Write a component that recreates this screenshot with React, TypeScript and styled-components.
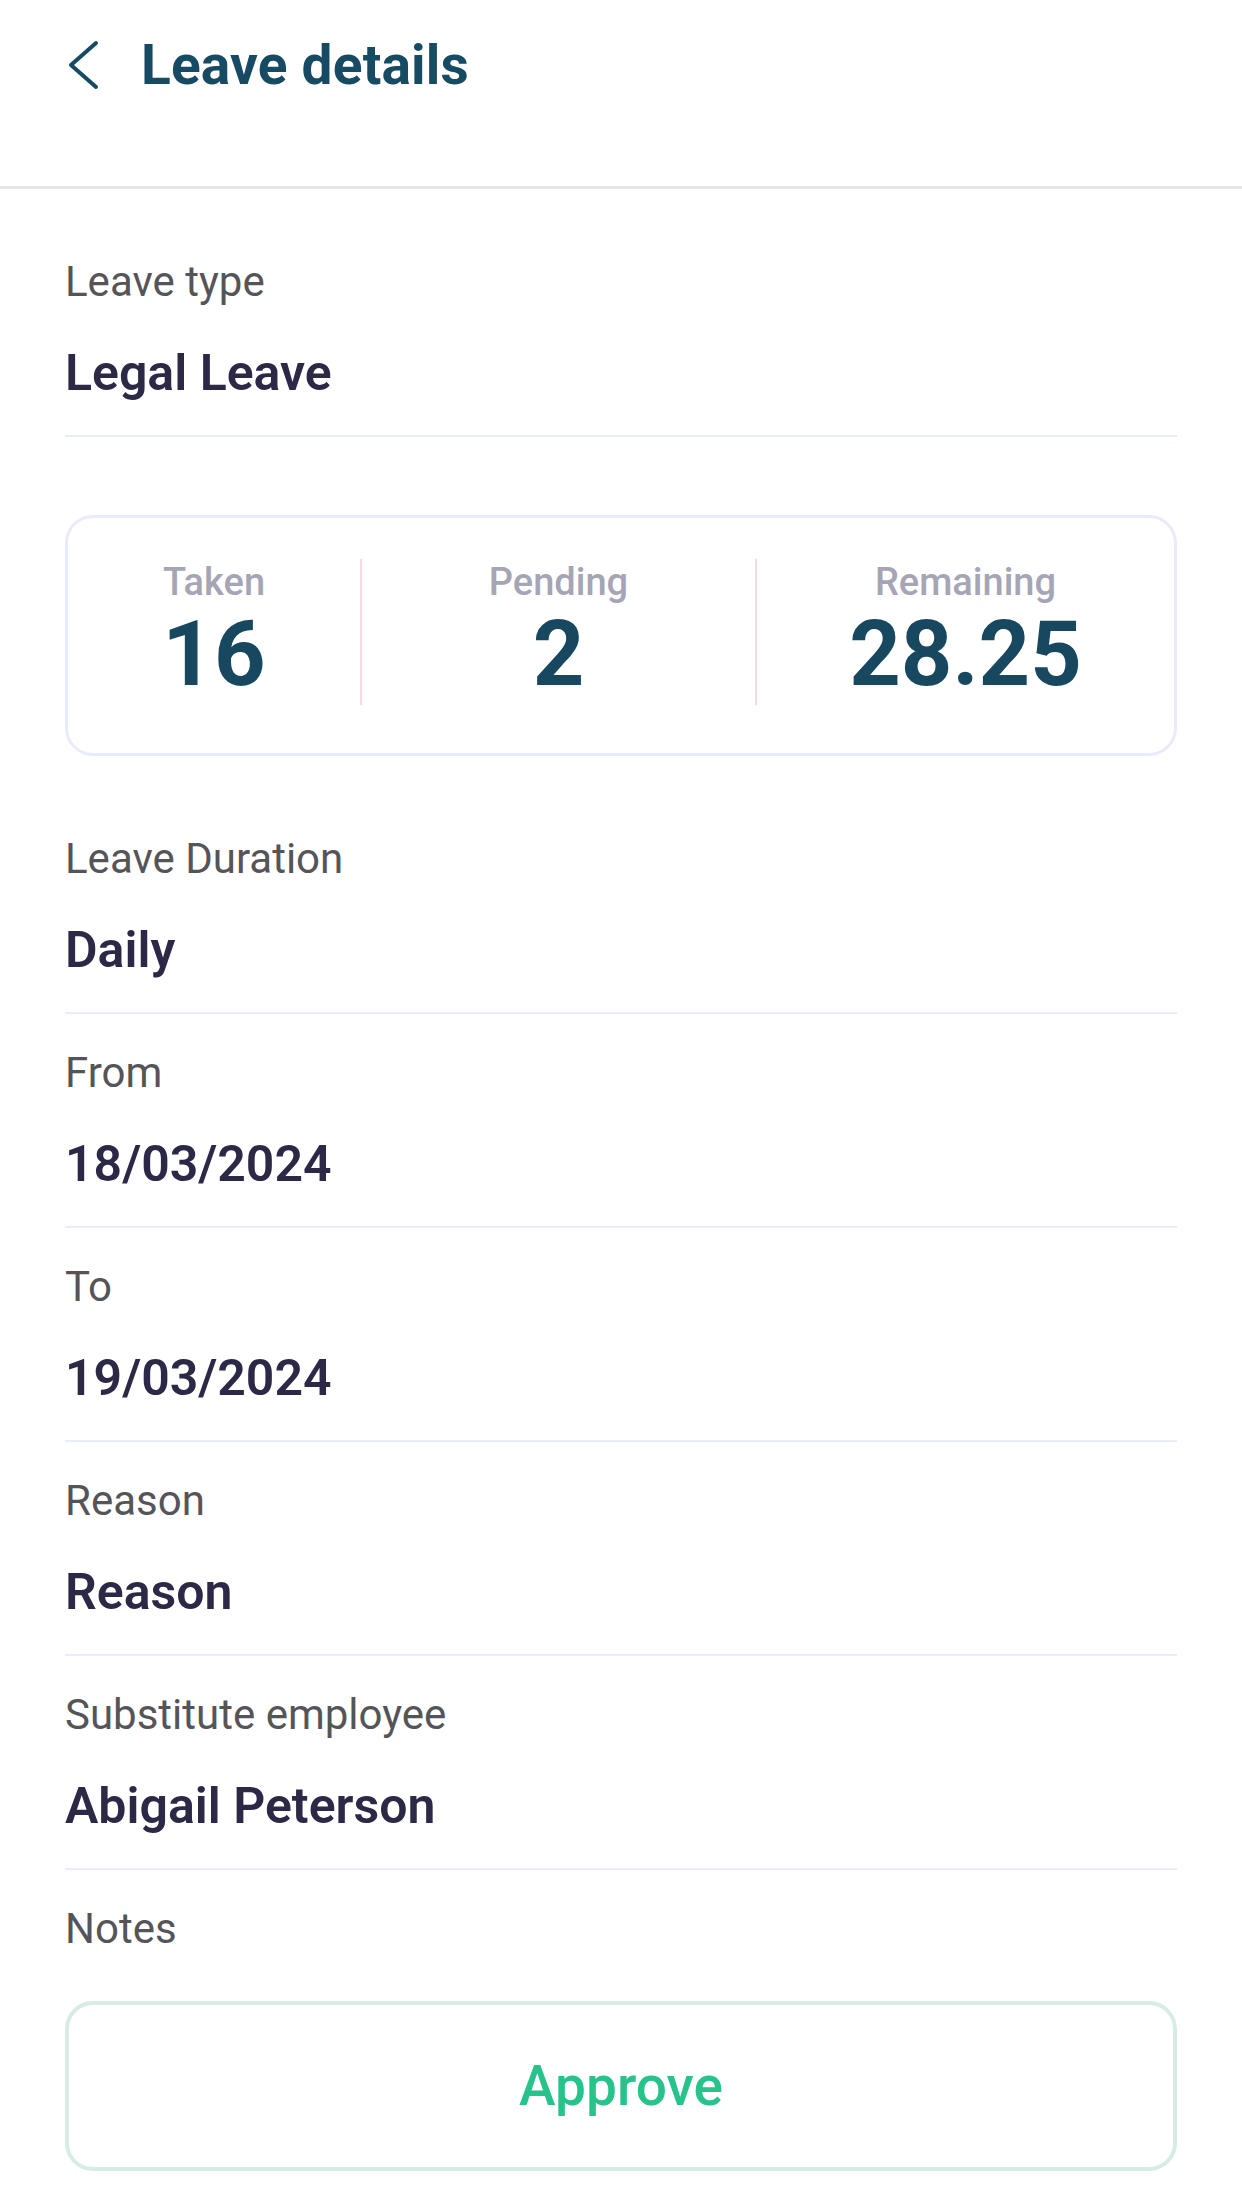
import styled, { createGlobalStyle } from "styled-components";

const GlobalStyle = createGlobalStyle`
  html, body {
    margin: 0;
    padding: 0;
    background: #ffffff;
  }
  body {
    font-family: Roboto, "Noto Sans", "Liberation Sans", sans-serif;
  }
  * {
    box-sizing: border-box;
  }
`;

const Page = styled.div`
  width: 1242px;
  min-height: 2208px;
  background: #ffffff;
  display: flex;
  flex-direction: column;
`;

const Header = styled.header`
  height: 189px;
  border-bottom: 3px solid #e6e6e8;
`;

const HeaderRow = styled.div`
  height: 130px;
  display: flex;
  align-items: center;
  padding-left: 66px;
  gap: 41px;
`;

const BackButton = styled.button`
  border: none;
  background: none;
  padding: 0;
  display: flex;
  align-items: center;
  color: #174a63;
  cursor: pointer;
`;

const Title = styled.h1`
  margin: 0;
  font-size: 55px;
  font-weight: 700;
  color: #174a63;
  letter-spacing: 0.2px;
`;

const Content = styled.main`
  padding: 34px 65px 0;
  display: flex;
  flex-direction: column;
`;

const Field = styled.div`
  padding: 33px 0 32px;
  border-bottom: 2px solid #e9ecfa;
`;

const Label = styled.div`
  font-size: 42px;
  line-height: 52px;
  color: #555559;
`;

const Value = styled.div`
  margin-top: 35px;
  font-size: 50px;
  line-height: 60px;
  font-weight: 600;
  color: #2c2947;
`;

const NotesLabel = styled(Label)`
  padding-top: 33px;
`;

const StatsCard = styled.section`
  margin: 78px 0 44px;
  border: 3px solid #e9ebfb;
  border-radius: 28px;
  padding: 41px 0 48px;
  display: grid;
  grid-template-columns: 292px 395px 1fr;
`;

const Stat = styled.div<{ $divided?: boolean }>`
  display: flex;
  flex-direction: column;
  align-items: center;
  border-left: ${(p) => (p.$divided ? "2px solid #f8d9e1" : "none")};
`;

const StatLabel = styled.div`
  font-size: 38px;
  line-height: 46px;
  font-weight: 500;
  color: #a5a5b6;
`;

const StatNumber = styled.div`
  font-size: 90px;
  line-height: 100px;
  font-weight: 700;
  color: #174860;
`;

const ApproveButton = styled.button`
  margin-top: 46px;
  height: 170px;
  width: 100%;
  border: 4px solid #d7ece5;
  border-radius: 28px;
  background: #ffffff;
  font-family: Roboto, "Noto Sans", "Liberation Sans", sans-serif;
  font-size: 55px;
  font-weight: 500;
  color: #27c38b;
  cursor: pointer;
`;

const ChevronLeft = () => (
  <svg width="34" height="50" viewBox="0 0 34 50" fill="none">
    <path
      d="M30 3 L5 25 L30 47"
      stroke="currentColor"
      strokeWidth="4"
      strokeLinecap="round"
      strokeLinejoin="round"
    />
  </svg>
);

const fields = [
  { label: "Leave Duration", value: "Daily" },
  { label: "From", value: "18/03/2024" },
  { label: "To", value: "19/03/2024" },
  { label: "Reason", value: "Reason" },
  { label: "Substitute employee", value: "Abigail Peterson" },
];

const stats = [
  { label: "Taken", value: "16" },
  { label: "Pending", value: "2" },
  { label: "Remaining", value: "28.25" },
];

const App = () => {
  return (
    <>
      <GlobalStyle />
      <Page>
        <Header>
          <HeaderRow>
            <BackButton aria-label="Back">
              <ChevronLeft />
            </BackButton>
            <Title>Leave details</Title>
          </HeaderRow>
        </Header>
        <Content>
          <Field>
            <Label>Leave type</Label>
            <Value>Legal Leave</Value>
          </Field>

          <StatsCard>
            {stats.map((s, i) => (
              <Stat key={s.label} $divided={i > 0}>
                <StatLabel>{s.label}</StatLabel>
                <StatNumber>{s.value}</StatNumber>
              </Stat>
            ))}
          </StatsCard>

          {fields.map((f) => (
            <Field key={f.label}>
              <Label>{f.label}</Label>
              <Value>{f.value}</Value>
            </Field>
          ))}

          <NotesLabel>Notes</NotesLabel>
          <ApproveButton>Approve</ApproveButton>
        </Content>
      </Page>
    </>
  );
};

export default App;
